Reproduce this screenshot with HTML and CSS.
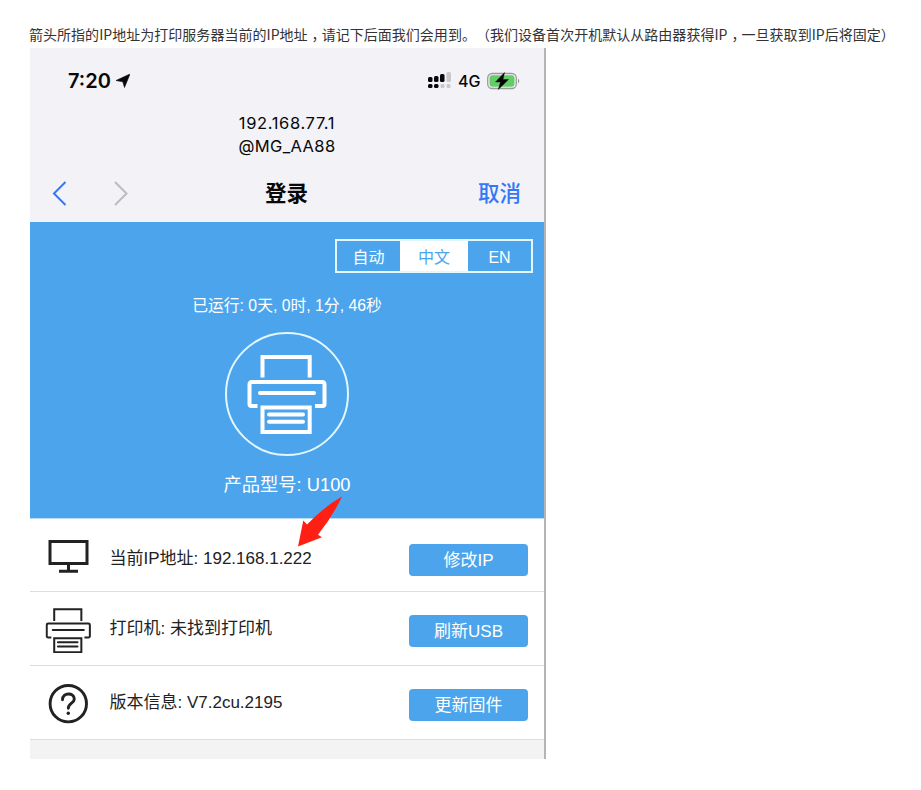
FILE: index.html
```
<!DOCTYPE html>
<html lang="zh-CN">
<head>
<meta charset="utf-8">
<title>登录</title>
<link rel="stylesheet" href="styles.css">
</head>
<body>
<svg class="defs" width="0" height="0" aria-hidden="true">
  <symbol id="printer" viewBox="0 0 80 80">
    <path d="M15.500 23.500V3H62.700V23.500M10.500 52H4.500Q2.500 52 2.500 50V30.500Q2.500 28 5 28H75Q77.500 28 77.500 30.500V50Q77.500 52 75.500 52H68M15.500 53.500H62.700V78H15.500Z"/>
    <path d="M13 39H67M22 60.500H56M22 67.700H56" stroke-linecap="round"/>
  </symbol>
</svg>
<p class="intro">箭头所指的IP地址为打印服务器当前的IP地址<span class="comma">，</span>请记下后面我们会用到。（我们设备首次开机默认从路由器获得IP<span class="comma">，</span>一旦获取到IP后将固定）</p>
<main class="phone">
  <header class="top">
    <div class="status">
      <span class="clock">7:20</span>
      <svg class="locate" width="14" height="14" viewBox="0 0 14 14"><path d="M14 0L8.500 13.500L6.800 7.800L0 6.500Z"/></svg>
      <svg class="signal" width="24" height="18" viewBox="0 0 24 18">
        <g fill="#080808"><rect x="0" y="5" width="4.500" height="5" rx="1.500"/><rect x="6" y="4" width="4.500" height="6" rx="1.500"/><rect x="12" y="2" width="4.500" height="8" rx="1.500"/><rect x="0" y="12" width="4.500" height="4" rx="1.500"/><rect x="6" y="12" width="4.500" height="4" rx="1.500"/></g>
        <g fill="#c8c8cb"><rect x="18.500" y="0" width="4.500" height="10" rx="1.500"/><rect x="12.500" y="12" width="4" height="4" rx="1.500"/><rect x="18.500" y="12" width="4" height="4" rx="1.500"/></g>
      </svg>
      <span class="net">4G</span>
      <svg class="battery" width="34" height="18" viewBox="0 0 34 18">
        <rect x=".7" y="1.500" width="28.600" height="15" rx="4.500" fill="none" stroke="#9a9c9b" stroke-width="1.300"/>
        <rect x="2.500" y="3.300" width="25" height="11.400" rx="3" fill="#65cd68"/>
        <path d="M31 6.500Q33.500 9 31 11.500Z" fill="#929294"/>
        <path d="M17.500 .5L8.500 10H13.500L11.300 17.500L21.500 7.500H16Z" fill="#050505" stroke="#050505" stroke-width=".4"/>
      </svg>
    </div>
    <div class="host"><span class="ip">192.168.77.1</span><br>@MG_AA88</div>
    <nav class="nav">
      <svg class="arrows" width="80" height="26" viewBox="0 0 80 26"><path d="M13.500 2L2 13.500L13.500 25" stroke="#3478f6"/><path d="M63 2L74.500 13.500L63 25" stroke="#bcbcc0"/></svg>
      <h1>登录</h1>
      <span class="cancel">取消</span>
    </nav>
  </header>
  <section class="hero">
    <div class="tabs"><span>自动</span><span class="on">中文</span><span>EN</span></div>
    <p class="uptime">已运行: 0天, 0时, 1分, 46秒</p>
    <div class="ring"><svg class="printer-lg" width="80" height="80"><use href="#printer"/></svg></div>
    <p class="model">产品型号: U100</p>
    <svg class="pointer" width="46" height="54" viewBox="0 0 46 54"><path d="M45 0.500Q36 20 21 38.800L25 41.300L1 50.500L6.300 24.500L10 28.500Q28 10 45 0.500Z"/></svg>
  </section>
  <section class="row row-ip">
    <svg class="icon" width="48" height="48" viewBox="0 -2 48 48"><path d="M6 8.500H43V30.500H6Z" stroke-width="3"/><path d="M24.500 30V37M15 38.300H34" stroke-width="3"/></svg>
    <span class="label">当前IP地址: 192.168.1.222</span><button>修改IP</button>
  </section>
  <section class="row row-printer">
    <svg class="icon printer-sm" width="48" height="48" viewBox="0 0 48 48"><use href="#printer" width="46" height="46" x="1.300" y="2.500"/></svg>
    <span class="label">打印机: 未找到打印机</span><button>刷新USB</button>
  </section>
  <section class="row row-version">
    <svg class="icon" width="48" height="48" viewBox="0 -.7 48 48"><circle cx="24.300" cy="24" r="18.200" stroke-width="2.900"/><path d="M18.500 20C18.500 12.500 30.300 12.500 30.300 19.300C30.300 23.500 24.300 23.500 24.300 28.500" stroke-width="2.900" stroke-linecap="round"/><circle cx="24.300" cy="33.500" r="1.700" fill="#222" stroke="none"/></svg>
    <span class="label">版本信息: V7.2cu.2195</span><button>更新固件</button>
  </section>
</main>
</body>
</html>
```
FILE: styles.css
```
* { box-sizing: border-box; }
body { margin: 0; padding: 24px 0 0 29px; background: #fff; font-family: "Liberation Sans", "Noto Sans CJK SC", sans-serif; color: #222; }
p, h1 { margin: 0; font-weight: 400; }
.defs { display: block; height: 0; }
.intro { height: 24px; line-height: 20px; font-family: "Noto Sans CJK SC", sans-serif; font-size: 14px; letter-spacing: .03px; color: #333; white-space: nowrap; text-spacing-trim: space-all; }
.comma { font-feature-settings: "halt"; padding: 0 3px 0 4px; }
.phone { margin-left: 1px; width: 516px; height: 711px; border-right: 2px solid #b4b4b8; background: #f3f3f3; }
.top { height: 174px; background: #f2f2f7; color: #080808; }
.status { height: 64px; padding: 2px 23px 0 38px; display: flex; align-items: center; }
.clock { font: 600 20px/24px Inter, sans-serif; width: 48px; }
.locate { fill: #080808; stroke: #080808; stroke-width: .6; }
.signal { margin-left: auto; margin-right: 6px; }
.net { font: 500 16px/20px Inter, sans-serif; width: 29px; }
.host { height: 46px; font: 16.500px/23px Inter, sans-serif; letter-spacing: .35px; text-align: center; }
.ip { letter-spacing: .65px; }
.nav { height: 64px; padding: 4px 23px 0 22px; display: grid; grid-template-columns: 80px 1fr 80px; align-items: center; }
.arrows { margin-top: 2px; fill: none; stroke-width: 2; }
h1 { font: 700 21.500px/32px "Noto Sans CJK SC", sans-serif; text-align: center; }
.cancel { font: 500 21.500px/32px "Noto Sans CJK SC", sans-serif; color: #3478f6; text-align: right; }
.hero { height: 297px; padding-top: 17px; position: relative; display: flex; flex-direction: column; align-items: center; background: #4ca5ec; color: #fff; border-bottom: 1px solid #b8dcf8; }
.tabs { align-self: flex-end; margin-right: 11px; width: 198px; height: 34px; border: 2px solid #e2f7ff; display: grid; grid-template-columns: 63px 68px 1fr; line-height: 34px; font-size: 16px; text-align: center; }
.tabs span { height: 30px; }
.on { background: #fff; color: #4ca5ec; }
.uptime { margin-top: 21px; font-size: 15.800px; line-height: 24px; }
.ring { margin-top: 14px; width: 124px; height: 124px; border: 2px solid #e2f7ff; border-radius: 50%; display: grid; place-items: center; }
.printer-lg { fill: none; stroke: #fff; stroke-width: 4; }
.model { margin-top: 15px; font-size: 18.300px; line-height: 28px; }
.pointer { position: absolute; left: 267px; top: 274px; fill: #ff2015; z-index: 1; }
.row { height: 74px; padding: 0 16px 0 14px; display: flex; align-items: center; background: #fff; border-bottom: 1px solid #ddd; }
.row-ip { height: 73px; }
.icon { fill: none; stroke: #222; }
.printer-sm { stroke-width: 3.500; }
.label { margin-left: 17.500px; flex: 1; font-size: 17px; line-height: 26px; white-space: nowrap; }
.row-ip .label { padding-top: 8px; }
button { width: 119px; height: 32px; margin-top: 5px; padding: 2px 0 0; border: 0; border-radius: 4px; background: #4ca5ec; color: #fff; font: inherit; font-size: 17px; line-height: 30px; }
.row-ip button { margin-top: 10px; }
```
